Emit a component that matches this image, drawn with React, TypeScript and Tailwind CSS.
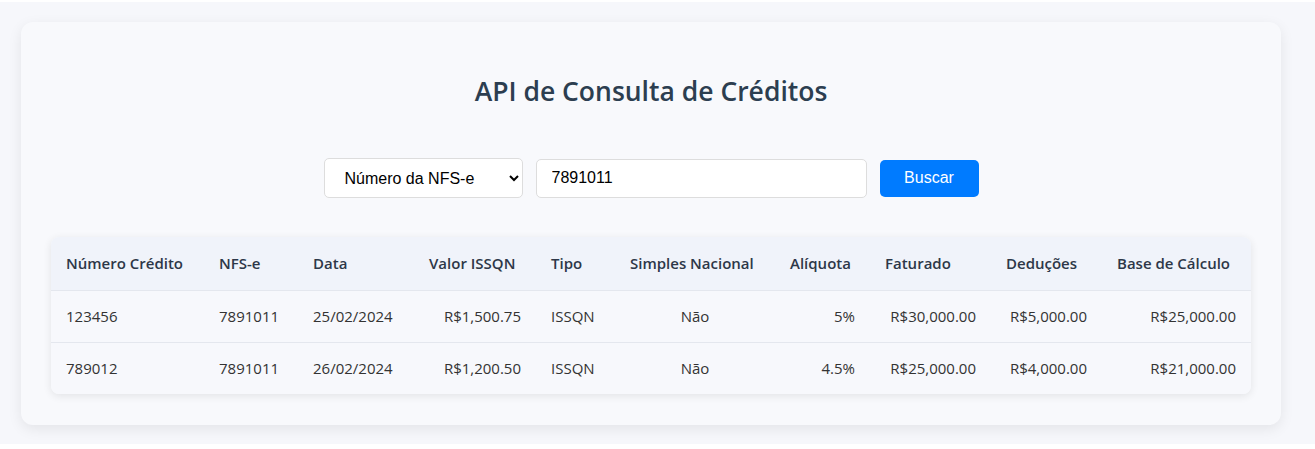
import { useState } from "react";

type Credito = {
  numero: string;
  nfse: string;
  data: string;
  valor: string;
  tipo: string;
  simples: string;
  aliquota: string;
  faturado: string;
  deducoes: string;
  base: string;
};

const creditos: Credito[] = [
  {
    numero: "123456",
    nfse: "7891011",
    data: "25/02/2024",
    valor: "R$1,500.75",
    tipo: "ISSQN",
    simples: "Não",
    aliquota: "5%",
    faturado: "R$30,000.00",
    deducoes: "R$5,000.00",
    base: "R$25,000.00",
  },
  {
    numero: "789012",
    nfse: "7891011",
    data: "26/02/2024",
    valor: "R$1,200.50",
    tipo: "ISSQN",
    simples: "Não",
    aliquota: "4.5%",
    faturado: "R$25,000.00",
    deducoes: "R$4,000.00",
    base: "R$21,000.00",
  },
];

const th = "px-[15px] text-left font-semibold";
const td = "px-[15px]";

export default function App() {
  const [tipo, setTipo] = useState("nfse");
  const [valor, setValor] = useState("7891011");

  return (
    <div className="bg-white pt-[2px] pb-[5px]">
      <div className="bg-[#f6f7fb] pl-[21px] pr-[34px] pt-[20px] pb-[19px]">
        <div className="rounded-[12px] bg-[#f8f9fc] px-[30px] pt-[54px] pb-[31px] shadow-[0_4px_14px_rgba(0,0,0,0.08)] font-['Open_Sans',sans-serif] text-[#333]">
          <h1 className="text-center text-[26.5px] leading-[31px] font-semibold text-[#2c3e50]">
            API de Consulta de Créditos
          </h1>

          <div className="mt-[51px] flex items-center justify-center gap-[13px] font-['Liberation_Sans',Arial,sans-serif] text-[16px]">
            <select
              value={tipo}
              onChange={(e) => setTipo(e.target.value)}
              className="h-[40px] w-[199px] rounded-[5px] border border-[#ddd] bg-white pl-[16px] pr-[6px] text-black"
            >
              <option value="nfse">Número da NFS-e</option>
              <option value="credito">Número do Crédito</option>
            </select>
            <input
              value={valor}
              onChange={(e) => setValor(e.target.value)}
              className="h-[39px] w-[331px] rounded-[5px] border border-[#ddd] bg-white px-[15px] text-black outline-none"
            />
            <button className="h-[37px] w-[99px] rounded-[5px] bg-[#007bff] text-white">
              Buscar
            </button>
          </div>

          <div className="mt-[39px] overflow-hidden rounded-[8px] shadow-[0_2px_8px_rgba(0,0,0,0.09)]">
            <table className="w-full table-fixed border-collapse text-[15px]">
              <colgroup>
                <col className="w-[153px]" />
                <col className="w-[94px]" />
                <col className="w-[116px]" />
                <col className="w-[122px]" />
                <col className="w-[79px]" />
                <col className="w-[160px]" />
                <col className="w-[95px]" />
                <col className="w-[121px]" />
                <col className="w-[111px]" />
                <col className="w-[149px]" />
              </colgroup>
              <thead>
                <tr className="h-[53px] border-b border-[#e4e7ee] bg-[#f0f3fa] text-[#2d3748]">
                  <th className={th}>Número Crédito</th>
                  <th className={th}>NFS-e</th>
                  <th className={th}>Data</th>
                  <th className={th}>Valor ISSQN</th>
                  <th className={th}>Tipo</th>
                  <th className={th}>Simples Nacional</th>
                  <th className={th}>Alíquota</th>
                  <th className={th}>Faturado</th>
                  <th className={th}>Deduções</th>
                  <th className={th}>Base de Cálculo</th>
                </tr>
              </thead>
              <tbody className="bg-[#f7f8fc]">
                {creditos.map((c, i) => (
                  <tr
                    key={c.numero}
                    className={
                      i < creditos.length - 1
                        ? "h-[52px] border-b border-[#e4e7ee]"
                        : "h-[52px]"
                    }
                  >
                    <td className={td}>{c.numero}</td>
                    <td className={td}>{c.nfse}</td>
                    <td className={td}>{c.data}</td>
                    <td className={`${td} text-right`}>{c.valor}</td>
                    <td className={td}>{c.tipo}</td>
                    <td className={`${td} text-center`}>{c.simples}</td>
                    <td className={`${td} text-right`}>{c.aliquota}</td>
                    <td className={`${td} text-right`}>{c.faturado}</td>
                    <td className={`${td} text-right`}>{c.deducoes}</td>
                    <td className={`${td} text-right`}>{c.base}</td>
                  </tr>
                ))}
              </tbody>
            </table>
          </div>
        </div>
      </div>
    </div>
  );
}
